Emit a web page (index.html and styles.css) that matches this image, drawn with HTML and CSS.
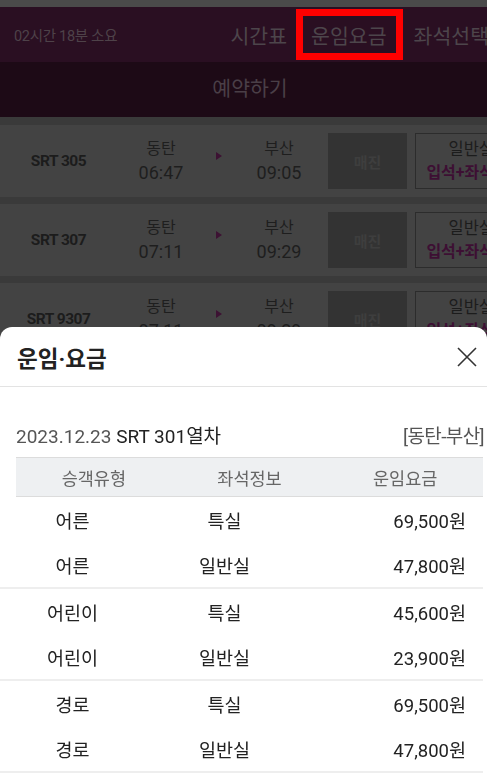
FILE: index.html
```html
<!DOCTYPE html>
<html lang="ko">
<head>
  <meta charset="UTF-8">
  <meta name="viewport" content="width=device-width, initial-scale=1.0">
  <title>운임요금</title>
  <link rel="stylesheet" href="styles.css">
</head>
<body>
  <div class="page">
    <div class="status-strip"></div>

    <header class="train-head">
      <span class="duration">02시간 18분 소요</span>
      <nav class="tabs">
        <span class="tab">시간표</span>
        <span class="tab-bar"></span>
        <span class="tab active">운임요금</span>
        <span class="tab">좌석선택</span>
      </nav>
    </header>

    <div class="reserve">예약하기</div>

    <!-- Train list behind the sheet -->
    <ul class="train-list">
      <li class="train-row">
        <span class="train-no">SRT 305</span>
        <span class="stop"><span class="stop-name">동탄</span><span class="stop-time">06:47</span></span>
        <span class="arrow"><i></i></span>
        <span class="stop"><span class="stop-name">부산</span><span class="stop-time">09:05</span></span>
        <span class="soldout">매진</span>
        <span class="seat"><span class="seat-name">일반실</span><span class="seat-type">입석+좌석</span></span>
      </li>
      <li class="train-row">
        <span class="train-no">SRT 307</span>
        <span class="stop"><span class="stop-name">동탄</span><span class="stop-time">07:11</span></span>
        <span class="arrow"><i></i></span>
        <span class="stop"><span class="stop-name">부산</span><span class="stop-time">09:29</span></span>
        <span class="soldout">매진</span>
        <span class="seat"><span class="seat-name">일반실</span><span class="seat-type">입석+좌석</span></span>
      </li>
      <li class="train-row">
        <span class="train-no">SRT 9307</span>
        <span class="stop"><span class="stop-name">동탄</span><span class="stop-time">07:11</span></span>
        <span class="arrow"><i></i></span>
        <span class="stop"><span class="stop-name">부산</span><span class="stop-time">09:29</span></span>
        <span class="soldout">매진</span>
        <span class="seat"><span class="seat-name">일반실</span><span class="seat-type">입석+좌석</span></span>
      </li>
    </ul>
  </div>

  <!-- Fare bottom sheet -->
  <section class="sheet">
    <div class="sheet-head">
      <h2 class="sheet-title">운임·요금</h2>
      <svg class="close" width="20" height="20" viewBox="0 0 20 20">
        <path d="M1 1 L19 19 M19 1 L1 19" stroke="#333" stroke-width="1.6" fill="none"/>
      </svg>
    </div>

    <div class="sheet-body">
      <div class="trip">
        <span><span class="trip-date">2023.12.23</span> SRT 301열차</span>
        <span class="trip-route">[동탄-부산]</span>
      </div>

      <div class="fare-head">
        <span>승객유형</span>
        <span>좌석정보</span>
        <span>운임요금</span>
      </div>

      <div class="fare-group">
        <div class="fare-row"><span>어른</span><span>특실</span><span class="price">69,500원</span></div>
        <div class="fare-row"><span>어른</span><span>일반실</span><span class="price">47,800원</span></div>
      </div>
      <div class="fare-group">
        <div class="fare-row"><span>어린이</span><span>특실</span><span class="price">45,600원</span></div>
        <div class="fare-row"><span>어린이</span><span>일반실</span><span class="price">23,900원</span></div>
      </div>
      <div class="fare-group">
        <div class="fare-row"><span>경로</span><span>특실</span><span class="price">69,500원</span></div>
        <div class="fare-row"><span>경로</span><span>일반실</span><span class="price">47,800원</span></div>
      </div>
    </div>
  </section>
</body>
</html>
```

FILE: styles.css
```css
* {
  box-sizing: border-box;
}

body {
  margin: 0;
  width: 487px;
  height: 782px;
  overflow: hidden;
  font-family: Roboto, "Noto Sans CJK KR", sans-serif;
  background-color: #3a3a3a;
}

/* Dimmed page behind the sheet (wider than the window, cut on the right) */
.page {
  width: 500px;
}

.status-strip {
  height: 7px;
  background-color: #4a4a4a;
}

.train-head {
  height: 55px;
  display: flex;
  padding: 0 11px 0 14px;
  background-color: #2a0f22;
  white-space: nowrap;
}

.duration {
  align-self: center;
  font-size: 14.5px;
  color: #4e4249;
  letter-spacing: -0.3px;
}

.tabs {
  margin-left: auto;
  display: flex;
  align-items: center;
  font-size: 20.5px;
  color: #4d454b;
}

.tab {
  position: relative;
  height: 100%;
  display: flex;
  align-items: center;
}

.tab-bar {
  width: 1px;
  height: 14px;
  margin: 0 14px 0 9px;
  background-color: #3d2c37;
}

.tab.active {
  margin-right: 27px;
}

/* red highlight around the current tab */
.tab.active::after {
  content: "";
  position: absolute;
  top: 2px;
  bottom: 2px;
  left: -15px;
  right: -16px;
  border: 7px solid #ff0000;
}

.reserve {
  height: 55px;
  line-height: 55px;
  text-align: center;
  font-size: 20.5px;
  color: #4a3f47;
  background-color: #1d0a16;
}

.train-list {
  list-style: none;
  margin: 0;
  padding: 8px 0 0;
  display: flex;
  flex-direction: column;
  gap: 7px;
}

.train-row {
  height: 72px;
  display: flex;
  align-items: center;
  background-color: #434343;
  white-space: nowrap;
}

.train-row > * {
  flex-shrink: 0;
}

.train-no {
  width: 117px;
  text-align: center;
  font-size: 15.5px;
  font-weight: bold;
  color: #1c1c1c;
  letter-spacing: -0.5px;
}

.stop {
  width: 88px;
  display: flex;
  flex-direction: column;
  align-items: center;
  color: #1e1e1e;
}

.stop + .arrow + .stop {
  width: 92px;
}

.stop-name {
  font-size: 16px;
  line-height: 24px;
}

.stop-time {
  font-size: 18px;
  line-height: 24px;
}

.arrow {
  width: 28px;
  display: flex;
  justify-content: center;
  margin-top: -10px;
}

.arrow i {
  border-left: 6px solid #3d1233;
  border-top: 4.5px solid transparent;
  border-bottom: 4.5px solid transparent;
}

.soldout {
  width: 79px;
  height: 56px;
  margin-left: 3px;
  display: flex;
  align-items: center;
  justify-content: center;
  font-size: 15px;
  font-weight: bold;
  color: #3e3e3e;
  background-color: #333333;
}

.seat {
  width: 90px;
  height: 56px;
  margin-left: 8px;
  padding-right: 10px;
  display: flex;
  flex-direction: column;
  align-items: flex-end;
  justify-content: center;
  border: 1px solid #2c2c2c;
}

.seat-name {
  font-size: 16.5px;
  line-height: 24px;
  color: #1c1c1c;
}

.seat-type {
  font-size: 16px;
  line-height: 22px;
  font-weight: bold;
  color: #3d0f33;
}

/* Bottom sheet */
.sheet {
  position: fixed;
  top: 327px;
  left: 0;
  right: 0;
  bottom: 0;
  background-color: #ffffff;
  border-radius: 12px 12px 0 0;
}

.sheet-head {
  height: 60px;
  display: flex;
  align-items: center;
  justify-content: space-between;
  padding: 0 10px 0 17px;
  border-bottom: 1px solid #e3e3e3;
}

.sheet-title {
  margin: 0;
  font-size: 22.5px;
  font-weight: bold;
  color: #222222;
}

.sheet-body {
  padding: 0 4px 0 16px;
}

.trip {
  display: flex;
  justify-content: space-between;
  margin: 38px -1px 8px 0;
  line-height: 24px;
  font-size: 19px;
  color: #222222;
}

.trip-date,
.trip-route {
  color: #555555;
}

.trip-route {
  letter-spacing: -0.6px;
}

.fare-head {
  height: 40px;
  display: grid;
  grid-template-columns: 1fr 1fr 1fr;
  align-items: center;
  text-align: center;
  font-size: 17.5px;
  color: #666666;
  background-color: #eef0f2;
  border-top: 1px solid #dcdcdc;
  border-bottom: 1px solid #dcdcdc;
}

/* body rows run from the left edge of the sheet */
.fare-group {
  margin-left: -16px;
  border-bottom: 2px solid #eeeeee;
}

.fare-row {
  height: 45px;
  display: grid;
  grid-template-columns: 145px 159px 1fr;
  align-items: center;
  text-align: center;
  font-size: 18.5px;
  color: #222222;
}

.fare-row .price {
  text-align: right;
  padding-right: 17px;
}
```
